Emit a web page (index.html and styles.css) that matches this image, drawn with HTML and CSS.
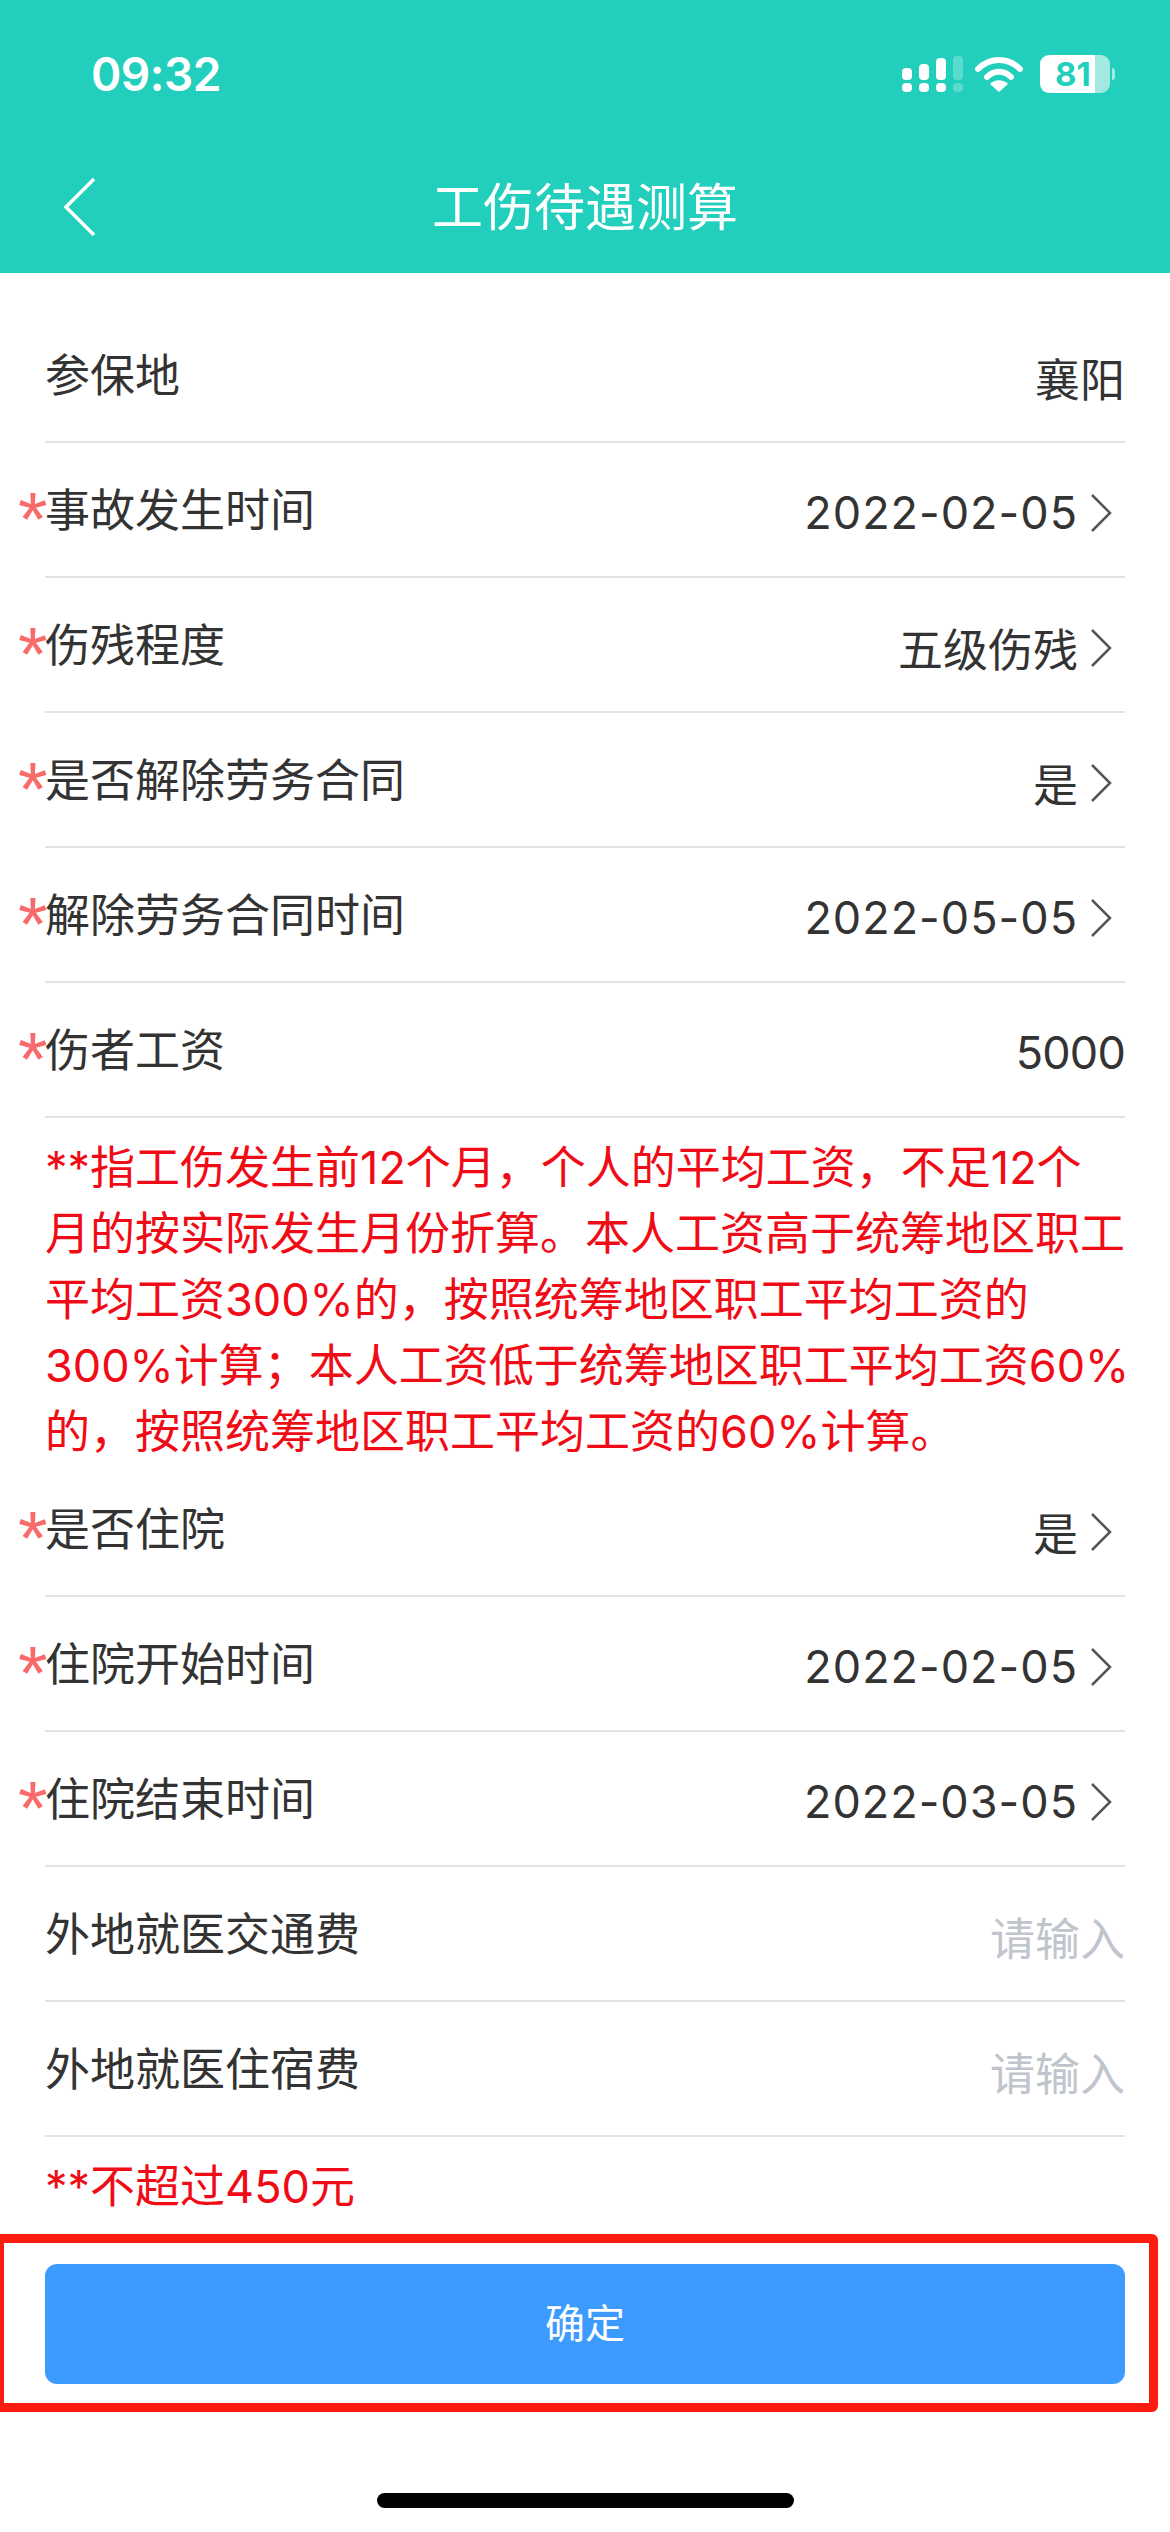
FILE: index.html
```html
<!DOCTYPE html>
<html lang="zh-CN">

<head>
    <meta charset="UTF-8">
    <meta name="viewport" content="width=device-width, initial-scale=1.0">
    <title>工伤待遇测算</title>
    <link rel="stylesheet" href="styles.css">
</head>

<body>
    <div class="page">
        <header class="top">
            <div class="status">
                <span class="time">09:32</span>
                <div class="status-icons">
                    <svg class="signal" viewBox="0 0 64 36" xmlns="http://www.w3.org/2000/svg">
                        <rect x="0" y="12" width="10" height="12" rx="4" fill="#fff" />
                        <rect x="17" y="8" width="10" height="16" rx="4" fill="#fff" />
                        <rect x="34" y="2" width="10" height="22" rx="4" fill="#fff" />
                        <rect x="51" y="0" width="10" height="24" rx="4" fill="#fff" opacity=".25" />
                        <rect x="0" y="27" width="10" height="9" rx="4" fill="#fff" />
                        <rect x="17" y="27" width="10" height="9" rx="4" fill="#fff" />
                        <rect x="34" y="27" width="10" height="9" rx="4" fill="#fff" />
                        <rect x="51" y="27" width="10" height="9" rx="4" fill="#fff" opacity=".25" />
                    </svg>
                    <svg class="wifi" viewBox="0 0 48 36" xmlns="http://www.w3.org/2000/svg">
                        <path d="M3 13 C15 1 33 1 45 13" fill="none" stroke="#fff" stroke-width="6" stroke-linecap="round" />
                        <path d="M12 21 C19 14 29 14 36 21" fill="none" stroke="#fff" stroke-width="6" stroke-linecap="round" />
                        <path d="M24 36 L15 28 C20 23 28 23 33 28 Z" fill="#fff" />
                    </svg>
                    <div class="battery">
                        <div class="battery-body">
                            <span class="battery-num">81</span>
                        </div>
                        <span class="battery-nub"></span>
                    </div>
                </div>
            </div>
            <div class="nav">
                <svg class="back" viewBox="0 0 34 60" xmlns="http://www.w3.org/2000/svg">
                    <path d="M31 2 L3 30 L31 58" fill="none" stroke="#fff" stroke-width="3.5" />
                </svg>
                <h1 class="nav-title">工伤待遇测算</h1>
            </div>
        </header>

        <main class="form">
            <div class="row">
                <span class="label">参保地</span>
                <span class="value">襄阳</span>
            </div>
            <div class="row required">
                <span class="label">事故发生时间</span>
                <span class="value date">2022-02-05<svg class="arrow" viewBox="0 0 22 38" xmlns="http://www.w3.org/2000/svg"><path d="M2 1 L20 19 L2 37" /></svg></span>
            </div>
            <div class="row required">
                <span class="label">伤残程度</span>
                <span class="value">五级伤残<svg class="arrow" viewBox="0 0 22 38" xmlns="http://www.w3.org/2000/svg"><path d="M2 1 L20 19 L2 37" /></svg></span>
            </div>
            <div class="row required">
                <span class="label">是否解除劳务合同</span>
                <span class="value">是<svg class="arrow" viewBox="0 0 22 38" xmlns="http://www.w3.org/2000/svg"><path d="M2 1 L20 19 L2 37" /></svg></span>
            </div>
            <div class="row required">
                <span class="label">解除劳务合同时间</span>
                <span class="value date">2022-05-05<svg class="arrow" viewBox="0 0 22 38" xmlns="http://www.w3.org/2000/svg"><path d="M2 1 L20 19 L2 37" /></svg></span>
            </div>
            <div class="row required">
                <span class="label">伤者工资</span>
                <span class="value amount">5000</span>
            </div>
            <p class="note">**指工伤发生前12个月，个人的平均工资，不足12个<br>月的按实际发生月份折算。本人工资高于统筹地区职工<br>平均工资300%的，按照统筹地区职工平均工资的<br>300%计算；本人工资低于统筹地区职工平均工资60%<br>的，按照统筹地区职工平均工资的60%计算。</p>
            <div class="row required">
                <span class="label">是否住院</span>
                <span class="value">是<svg class="arrow" viewBox="0 0 22 38" xmlns="http://www.w3.org/2000/svg"><path d="M2 1 L20 19 L2 37" /></svg></span>
            </div>
            <div class="row required">
                <span class="label">住院开始时间</span>
                <span class="value date">2022-02-05<svg class="arrow" viewBox="0 0 22 38" xmlns="http://www.w3.org/2000/svg"><path d="M2 1 L20 19 L2 37" /></svg></span>
            </div>
            <div class="row required">
                <span class="label">住院结束时间</span>
                <span class="value date">2022-03-05<svg class="arrow" viewBox="0 0 22 38" xmlns="http://www.w3.org/2000/svg"><path d="M2 1 L20 19 L2 37" /></svg></span>
            </div>
            <div class="row">
                <span class="label">外地就医交通费</span>
                <span class="value placeholder">请输入</span>
            </div>
            <div class="row">
                <span class="label">外地就医住宿费</span>
                <span class="value placeholder">请输入</span>
            </div>
            <p class="note note-short">**不超过450元</p>
            <button class="submit">确定</button>
        </main>

        <div class="highlight"></div>
        <div class="home-bar"></div>
    </div>
</body>

</html>
```

FILE: styles.css
```css
body {
    margin: 0;
    background: #fff;
    font-family: "Noto Sans CJK SC", "Noto Sans", sans-serif;
    color: #333;
}

.page {
    position: relative;
    width: 1170px;
    height: 2532px;
    overflow: hidden;
}

.top {
    height: 273px;
    background-color: #22cfbd;
    color: #fff;
}

.status {
    height: 150px;
    box-sizing: border-box;
    padding: 50px 55px 0 91px;
    display: flex;
    justify-content: space-between;
    align-items: flex-start;
}

.time {
    font-family: Inter, "Liberation Sans", sans-serif;
    font-size: 46px;
    font-weight: 600;
    line-height: 48px;
    letter-spacing: -0.5px;
}

.status-icons {
    display: flex;
    align-items: center;
    gap: 9px;
    padding-top: 5px;
}

.signal {
    width: 64px;
    height: 36px;
}

.wifi {
    width: 48px;
    height: 36px;
    margin-right: 8px;
}

.battery {
    display: flex;
    align-items: center;
    gap: 2px;
}

.battery-body {
    width: 70px;
    height: 38px;
    border-radius: 9px;
    background: linear-gradient(to right, #fff 78%, #a3e9e1 78%);
    color: #22cfbd;
    font-family: Inter, "Liberation Sans", sans-serif;
    font-size: 33px;
    font-weight: 700;
    line-height: 38px;
    padding-left: 15px;
    box-sizing: border-box;
}

.battery-nub {
    width: 3px;
    height: 12px;
    border-radius: 0 3px 3px 0;
    background: #a3e9e1;
}

.nav {
    position: relative;
    height: 123px;
    display: flex;
    justify-content: center;
    align-items: flex-start;
}

.back {
    position: absolute;
    left: 63px;
    top: 27px;
    width: 34px;
    height: 60px;
}

.nav-title {
    margin: 0;
    font-size: 51px;
    font-weight: 400;
    line-height: 60px;
    padding-top: 24px;
}

.form {
    padding: 35px 45px 0;
}

.row {
    position: relative;
    height: 135px;
    box-sizing: border-box;
    border-bottom: 2px solid #e3e3e3;
    display: flex;
    justify-content: space-between;
    align-items: center;
    font-size: 45px;
}

.label {
    padding-bottom: 4px;
}

.required::before {
    content: "*";
    position: absolute;
    left: -27px;
    top: 36px;
    color: #f96a6a;
    font-family: "Liberation Sans", sans-serif;
    font-size: 76px;
    line-height: 80px;
}

.value {
    display: flex;
    align-items: center;
    padding-top: 6px;
    font-family: Inter, "Noto Sans CJK SC", sans-serif;
}

.date {
    letter-spacing: 1px;
}

.amount {
    letter-spacing: -0.8px;
}

.arrow {
    width: 22px;
    height: 38px;
    margin-left: 12px;
    margin-right: 13px;
    fill: none;
    stroke: #555;
    stroke-width: 2.5;
}

.placeholder {
    color: #c0c4cc;
}

.note {
    margin: 0 0 -3px;
    padding: 17px 0 0;
    color: #f00c16;
    font-family: Inter, "Noto Sans CJK SC", sans-serif;
    font-size: 45px;
    line-height: 66px;
    white-space: nowrap;
}

.submit {
    display: block;
    width: 100%;
    height: 120px;
    margin-top: 47px;
    padding: 0 0 6px;
    border: none;
    border-radius: 12px;
    background-color: #3d9bff;
    color: #fff;
    font-family: inherit;
    font-size: 40px;
}

.highlight {
    position: absolute;
    left: -5px;
    top: 2234px;
    width: 1163px;
    height: 178px;
    box-sizing: border-box;
    border: 9px solid #fb1d0f;
    border-radius: 6px;
}

.home-bar {
    position: absolute;
    left: 377px;
    top: 2493px;
    width: 417px;
    height: 15px;
    border-radius: 8px;
    background-color: #000;
}
```
